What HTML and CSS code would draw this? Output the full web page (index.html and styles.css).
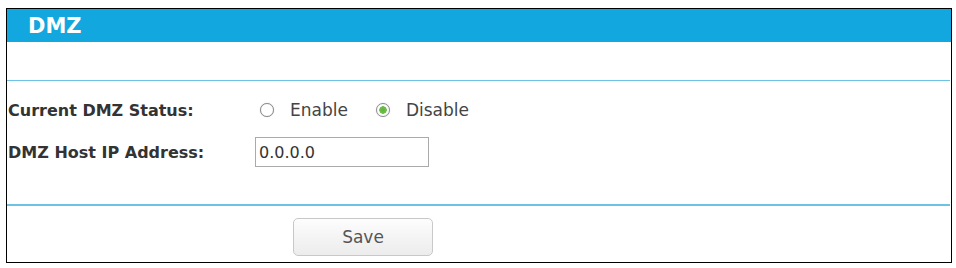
FILE: index.html
```html
<!DOCTYPE html>
<html>
<head>
<meta charset="utf-8">
<link rel="stylesheet" href="styles.css">
</head>
<body>
<div class="panel">
  <div class="header">DMZ</div>
  <div class="blank"></div>
  <div class="divider"></div>
  <div class="form">
    <div class="row">
      <div class="label">Current DMZ Status:</div>
      <div class="value">
        <label class="opt"><span class="radio"></span><span class="opt-text">Enable</span></label>
        <label class="opt"><span class="radio checked"></span><span class="opt-text">Disable</span></label>
      </div>
    </div>
    <div class="row">
      <div class="label">DMZ Host IP Address:</div>
      <div class="value">
        <input class="ip" type="text" value="0.0.0.0">
      </div>
    </div>
  </div>
  <div class="divider thick"></div>
  <div class="actions">
    <button class="btn" type="button">Save</button>
  </div>
</div>
</body>
</html>
```
FILE: styles.css
```css
html, body {
  margin: 0;
  padding: 0;
  background: #fff;
}
body {
  font-family: "DejaVu Sans", Verdana, sans-serif;
}
.panel {
  margin: 8px 0 0 6px;
  width: 944px;
  height: 253px;
  border: 1px solid #000;
  display: flex;
  flex-direction: column;
}
.header {
  height: 33px;
  box-sizing: border-box;
  padding-top: 2px;
  background: #12a7de;
  color: #fff;
  font-weight: bold;
  font-size: 21px;
  line-height: 31px;
  padding-left: 21px;
}
.blank {
  height: 38px;
}
.divider {
  height: 1px;
  background: #6cc3e6;
  margin-right: 1px;
}
.divider.thick {
  height: 2px;
}
.form {
  padding-top: 8px;
  height: 123px;
  box-sizing: border-box;
}
.row {
  height: 42px;
  display: flex;
  align-items: center;
}
.label {
  width: 247px;
  padding-left: 1px;
  font-weight: bold;
  font-size: 16px;
  color: #333;
}
.value {
  display: flex;
  align-items: center;
}
.opt {
  display: flex;
  align-items: center;
  font-size: 17px;
  color: #444;
}
.opt + .opt {
  margin-left: 28px;
}
.opt:first-child {
  margin-left: 5px;
}
.radio {
  width: 12px;
  height: 12px;
  border: 1px solid #8a8a8a;
  border-radius: 50%;
  background: #fff;
  box-shadow: 0 0 1px #bbb;
  margin-right: 16px;
  box-sizing: content-box;
}
.radio.checked {
  background: radial-gradient(circle, #5cb33a 0, #6ec04a 3.5px, #fff 4px);
}
.ip {
  width: 174px;
  height: 30px;
  box-sizing: border-box;
  border: 1px solid #aaa;
  padding: 0 3px;
  font-family: "DejaVu Sans", Verdana, sans-serif;
  font-size: 16px;
  color: #333;
  outline: none;
}
.actions {
  padding: 12px 0 0 286px;
}
.btn {
  width: 140px;
  height: 38px;
  border: 1px solid #c8c8c8;
  border-radius: 5px;
  background: linear-gradient(#fdfdfd, #ececec);
  font-family: "DejaVu Sans", Verdana, sans-serif;
  font-size: 17px;
  color: #555;
  padding: 0;
}
```
